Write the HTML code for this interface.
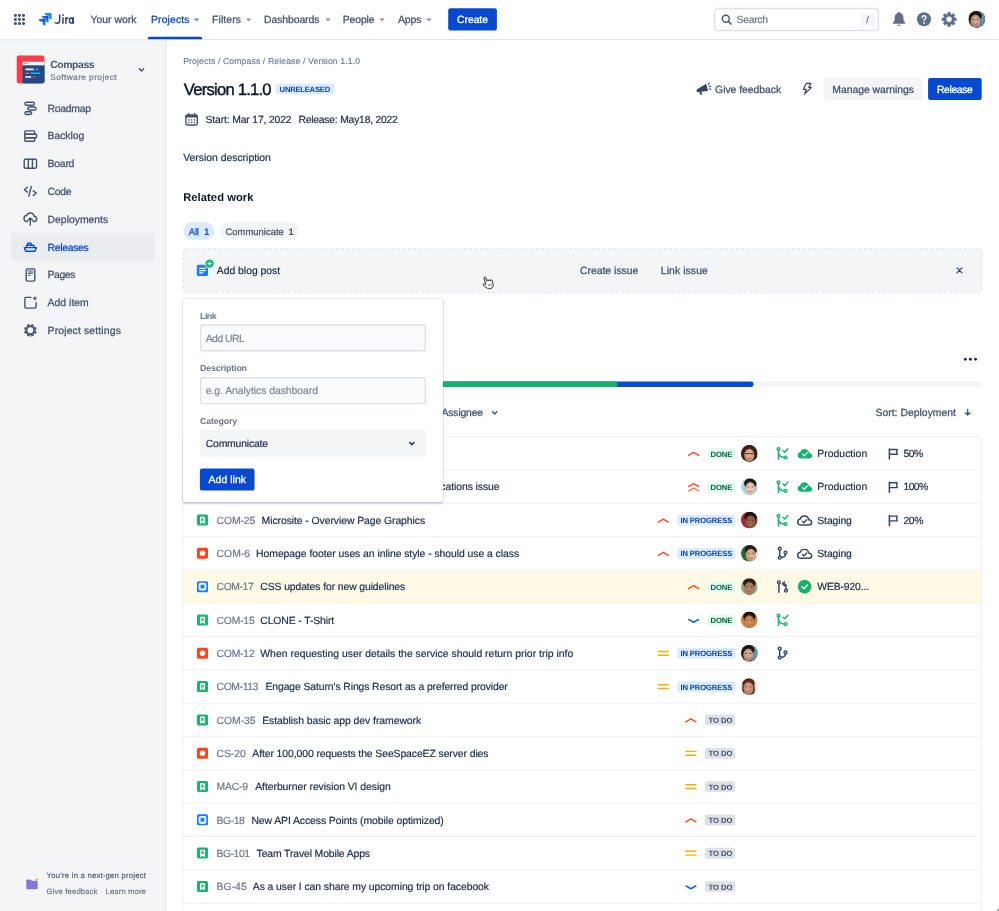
<!DOCTYPE html>
<html lang="en"><head><meta charset="utf-8"><title>Version 1.1.0 - Compass - Jira</title>
<style>
html,body{margin:0;padding:0;background:#fff;}
body{width:999px;height:911px;overflow:hidden;font-family:"Liberation Sans", sans-serif;}
#app{position:relative;width:999px;height:911px;overflow:hidden;background:#fff;font-family:"Liberation Sans", sans-serif;will-change:transform;}
.t{position:absolute;white-space:pre;line-height:1;font-family:"Liberation Sans", sans-serif;text-rendering:geometricPrecision;}
.a{position:absolute;}
svg{position:absolute;overflow:visible;}
</style></head>
<body>
<div id="app">
<div class="a" style="left:0.00px;top:0.00px;width:999.00px;height:39.00px;background:#fff;"></div>
<div class="a" style="left:0;top:38.900px;width:999px;height:1px;background:#E3E5EA;"></div>
<div class="a" style="left:0.00px;top:39.40px;width:165.20px;height:871.60px;background:#F4F5F7;"></div>
<div class="a" style="left:165px;top:39.400px;width:1.800px;height:871.6px;background:linear-gradient(to right,#F0F1F4,#ECEDF1);"></div>
<div class="a" style="left:0;top:39.400px;width:166.800px;height:2px;background:linear-gradient(to bottom,rgba(9,30,66,0.05),rgba(9,30,66,0));"></div>
<div class="a" style="left:11.20px;top:233.20px;width:144.10px;height:27.60px;background:#EBECF0;border-radius:3px;"></div>
<svg style="left:0;top:0;" width="999" height="911" viewBox="0 0 999 911"><rect x="13.90" y="13.95" width="3" height="3" rx="1.4" fill="#42526E"/><rect x="13.90" y="18.00" width="3" height="3" rx="1.4" fill="#42526E"/><rect x="13.90" y="22.05" width="3" height="3" rx="1.4" fill="#42526E"/><rect x="17.95" y="13.95" width="3" height="3" rx="1.4" fill="#42526E"/><rect x="17.95" y="18.00" width="3" height="3" rx="1.4" fill="#42526E"/><rect x="17.95" y="22.05" width="3" height="3" rx="1.4" fill="#42526E"/><rect x="22.00" y="13.95" width="3" height="3" rx="1.4" fill="#42526E"/><rect x="22.00" y="18.00" width="3" height="3" rx="1.4" fill="#42526E"/><rect x="22.00" y="22.05" width="3" height="3" rx="1.4" fill="#42526E"/><defs><linearGradient id="jg1" x1="0.95" y1="0.05" x2="0.45" y2="0.6"><stop offset="0.15" stop-color="#0052CC"/><stop offset="1" stop-color="#2684FF"/></linearGradient></defs><g transform="translate(38.7 13.0) scale(0.536 0.527)"><path d="M23.013 0H11.455a5.215 5.215 0 0 0 5.215 5.215h2.129v2.057A5.215 5.215 0 0 0 24 12.483V1.005A1.001 1.001 0 0 0 23.013 0z" fill="#2684FF"/><path d="M17.294 5.757H5.736a5.215 5.215 0 0 0 5.215 5.214h2.129v2.058a5.218 5.218 0 0 0 5.215 5.214V6.758a1.001 1.001 0 0 0-1.001-1.001z" fill="url(#jg1)"/><path d="M11.571 11.513H0a5.218 5.218 0 0 0 5.232 5.215h2.13v2.057A5.215 5.215 0 0 0 12.575 24V12.518a1.005 1.005 0 0 0-1.005-1.005z" fill="url(#jg1)"/></g><g fill="none" stroke="#253858" stroke-width="1.4" stroke-linecap="butt"><path d="M59.7 14.5V20.5C59.7 22.3 58.6 23.2 57.1 23.2C56.100 23.200 55.300 23 54.600 22.500"/><path d="M63 17.300V23.800"/><path d="M65.900 17.300V23.800M65.900 20.300C65.900 18.700 66.800 17.900 68.300 18"/><path d="M73.200 17.300V23.800"/><ellipse cx="71.300" cy="20.600" rx="1.900" ry="2.550"/></g><circle cx="63" cy="15.100" r="0.950" fill="#253858"/><path d="M194.30 18.70h4.4l-2.2 2.5z" fill="#4A86E8" stroke="#4A86E8" stroke-width="0.4" stroke-linejoin="round"/><path d="M246.40 18.70h4.4l-2.2 2.5z" fill="#8792A8" stroke="#8792A8" stroke-width="0.4" stroke-linejoin="round"/><path d="M325.80 18.70h4.4l-2.2 2.5z" fill="#8792A8" stroke="#8792A8" stroke-width="0.4" stroke-linejoin="round"/><path d="M379.80 18.70h4.4l-2.2 2.5z" fill="#8792A8" stroke="#8792A8" stroke-width="0.4" stroke-linejoin="round"/><path d="M426.80 18.70h4.4l-2.2 2.5z" fill="#8792A8" stroke="#8792A8" stroke-width="0.4" stroke-linejoin="round"/><path d="M148 39.150v-1.250a1.100 1.100 0 0 1 1.100-1.100h51.800a1.100 1.100 0 0 1 1.100 1.100v1.250z" fill="#0749D1"/><rect x="448.2" y="8.3" width="48.7" height="22.2" rx="2.2" fill="#0749D1"/><rect x="714.500" y="8.500" width="163.900" height="22" rx="3.600" fill="#fff" stroke="#DFE1E6" stroke-width="1.400"/><circle cx="725.800" cy="18.800" r="3.500" fill="none" stroke="#42526E" stroke-width="1.400"/><path d="M728.400 21.400l2.600 2.600" stroke="#42526E" stroke-width="1.500" stroke-linecap="round"/><rect x="861" y="13.1" width="13.5" height="12.6" rx="2" fill="#F4F5F7"/><path d="M899.05 12.1c.55 0 1 .4 1 .95c2.1.5 3.4 2.200 3.400 4.500v2.600l1.700 2.500c.3.450 0 1.050-.550 1.050h-11.100c-.550 0-.850-.600-.550-1.050l1.700-2.500v-2.600c0-2.300 1.300-4 3.400-4.500c0-.550.450-.950 1-.950z" fill="#5F6E89"/><path d="M897.500 24.800h3.100a1.550 1.350 0 0 1 -3.100 0z" fill="#5F6E89"/><circle cx="924" cy="19.3" r="7.05" fill="#5F6E89"/><path d="M922.100 17.700c0-1.100.850-1.950 1.950-1.950s1.950.750 1.950 1.800c0 1.400-1.950 1.500-1.950 3.100" fill="none" stroke="#fff" stroke-width="1.300" stroke-linecap="round"/><circle cx="924.05" cy="22.900" r=".85" fill="#fff"/><path d="M950.33 26.50L947.87 26.50L947.53 24.41L946.63 24.04L944.91 25.27L943.18 23.54L944.41 21.82L944.04 20.92L941.95 20.58L941.95 18.12L944.04 17.78L944.41 16.88L943.18 15.16L944.91 13.43L946.63 14.66L947.53 14.29L947.87 12.20L950.33 12.20L950.67 14.29L951.57 14.66L953.29 13.43L955.02 15.16L953.79 16.88L954.16 17.78L956.25 18.12L956.25 20.58L954.16 20.92L953.79 21.82L955.02 23.54L953.29 25.27L951.57 24.04L950.67 24.41Z M952.10 19.35a3.0 3.0 0 1 0 -6.0 0a3.0 3.0 0 1 0 6.0 0z" fill="#5F6E89" fill-rule="evenodd" stroke="#5F6E89" stroke-width="0.5" stroke-linejoin="round"/><clipPath id="avu"><circle cx="976.80" cy="19.30" r="8.40"/></clipPath><radialGradient id="avug" cx="0.5" cy="0.45" r="0.6"><stop offset="0.45" stop-color="#D3A188"/><stop offset="1" stop-color="#D3A188" stop-opacity="0.6"/></radialGradient><g clip-path="url(#avu)"><rect x="968.40" y="10.90" width="16.80" height="16.80" fill="#1B1717"/><rect x="977.64" y="10.90" width="8.40" height="16.80" fill="#5E93A6"/><ellipse cx="975.54" cy="31.48" rx="7.98" ry="4.20" fill="#1B1717"/><ellipse cx="975.54" cy="15.94" rx="6.22" ry="5.04" fill="#16120F"/><ellipse cx="975.54" cy="20.98" rx="5.38" ry="6.72" fill="#16120F" opacity="0.3"/><ellipse cx="975.54" cy="21.15" rx="5.12" ry="6.55" fill="url(#avug)"/><rect x="972.52" y="19.05" width="1.85" height="0.92" fill="#2A1A14" opacity="0.6"/><rect x="976.72" y="19.05" width="1.85" height="0.92" fill="#2A1A14" opacity="0.6"/><path d="M973.44 23.67Q975.54 25.35 977.64 23.67" fill="#fff" fill-opacity="0.55" stroke="#7A2E2A" stroke-width="0.67" opacity="0.75"/></g><clipPath id="pav"><rect x="16.5" y="55.3" width="28.1" height="28.1" rx="2.6"/></clipPath><g clip-path="url(#pav)"><rect x="16.5" y="55.3" width="28.1" height="28.1" fill="#FF3B47"/><rect x="22.6" y="61.7" width="23" height="23" rx="1" fill="#1F4A87"/><rect x="22.6" y="61.7" width="23" height="3.6" fill="#F4F5F7"/><rect x="24.2" y="62.9" width="1.3" height="1.2" fill="#FF5630"/><rect x="26" y="62.900" width="1.3" height="1.2" fill="#FFC400"/><rect x="27.800" y="62.900" width="1.3" height="1.2" fill="#57D9A3"/><rect x="25.3" y="68.6" width="8.6" height="1.6" rx=".5" fill="#fff"/><rect x="35.500" y="68.600" width="2.6" height="1.6" rx=".5" fill="#4C9AFF"/><rect x="25.3" y="72.4" width="4" height="1.6" rx=".5" fill="#FF5630"/><rect x="30.600" y="72.400" width="9.6" height="1.6" rx=".5" fill="#00C7E6"/><rect x="25.3" y="76.2" width="6" height="1.6" rx=".5" fill="#fff"/><rect x="33" y="76.200" width="2.400" height="1.6" rx=".5" fill="#FF5630"/></g><path d="M139.35 68.80L141.50 71.00L143.65 68.80" fill="none" stroke="#42526E" stroke-width="1.4" stroke-linecap="round" stroke-linejoin="round"/><g fill="none" stroke="#42526E" stroke-width="1.4" stroke-linecap="round" stroke-linejoin="round"><rect x="24.9" y="102.2" width="9.4" height="3.1" rx="1.55"/><rect x="27.8" y="106.95" width="8.2" height="3.1" rx="1.55"/><rect x="24.9" y="111.700" width="6.8" height="2.8" rx="1.4"/></g><g fill="none" stroke="#42526E" stroke-width="1.4" stroke-linecap="round" stroke-linejoin="round"><rect x="24.700" y="130.900" width="10" height="3.300" rx="1"/><rect x="24.700" y="134.200" width="12" height="3.600" rx="1"/><rect x="24.700" y="137.800" width="10" height="3.400" rx="1"/></g><g fill="none" stroke="#42526E" stroke-width="1.4" stroke-linecap="round" stroke-linejoin="round"><rect x="24.2" y="159.2" width="12.3" height="9" rx="1.1"/><path d="M28.300 159.200v9M32.400 159.200v9"/></g><g fill="none" stroke="#42526E" stroke-width="1.4" stroke-linecap="round" stroke-linejoin="round"><path d="M27.400 187.300L24.400 189.700L27.400 192.100M33.200 190.700L36.200 193.100L33.200 195.500M31.300 186.500L28.800 196.400"/></g><g fill="none" stroke="#42526E" stroke-width="1.4" stroke-linecap="round" stroke-linejoin="round"><path d="M27.400 221.500C25.400 221.500 24 220.200 24 218.400C24 216.800 25.200 215.500 26.800 215.300C27.300 213.900 28.700 213 30.300 213C32.300 213 33.900 214.400 34.200 216.300C35.600 216.400 36.600 217.500 36.600 218.900C36.600 220.300 35.500 221.500 34 221.500H33.200"/><path d="M30.300 225.300V218.300M28 220.300L30.300 218L32.600 220.300"/></g><g fill="none" stroke="#0749D1" stroke-width="1.4" stroke-linecap="round" stroke-linejoin="round"><path d="M24.200 247.600H36.500L35 251.200H25.700Z"/><path d="M26.600 247.600V245.300H33.600L34.400 247.600M27.700 245.300V243.100H31V245.300"/></g><g fill="none" stroke="#42526E" stroke-width="1.4" stroke-linecap="round" stroke-linejoin="round"><rect x="26.200" y="268.900" width="8.600" height="12.200" rx="1.100"/><path d="M28.300 271h4.400M28.300 273.100h4.400M28.300 275.200h2" stroke-width="1.100"/></g><g fill="none" stroke="#42526E" stroke-width="1.4" stroke-linecap="round" stroke-linejoin="round"><path d="M30.800 297.400H26a1.100 1.100 0 0 0 -1.100 1.100V307a1.100 1.100 0 0 0 1.100 1.100H35a1.100 1.100 0 0 0 1.100 -1.100V302.700"/></g><path d="M34.900 295.700l.75 1.850l1.850.75l-1.850.75l-.75 1.850l-.75-1.850l-1.850-.75l1.850-.75z" fill="#42526E"/><circle cx="30.35" cy="330.35" r="3.900" fill="none" stroke="#42526E" stroke-width="1.800"/><path d="M34.51 332.07L36.12 332.74" stroke="#42526E" stroke-width="2.800" stroke-linecap="butt"/><path d="M32.07 334.51L32.74 336.12" stroke="#42526E" stroke-width="2.800" stroke-linecap="butt"/><path d="M28.63 334.51L27.96 336.12" stroke="#42526E" stroke-width="2.800" stroke-linecap="butt"/><path d="M26.19 332.07L24.58 332.74" stroke="#42526E" stroke-width="2.800" stroke-linecap="butt"/><path d="M26.19 328.63L24.58 327.96" stroke="#42526E" stroke-width="2.800" stroke-linecap="butt"/><path d="M28.63 326.19L27.96 324.58" stroke="#42526E" stroke-width="2.800" stroke-linecap="butt"/><path d="M32.07 326.19L32.74 324.58" stroke="#42526E" stroke-width="2.800" stroke-linecap="butt"/><path d="M34.51 328.63L36.12 327.96" stroke="#42526E" stroke-width="2.800" stroke-linecap="butt"/><path d="M26.300 880.300a.800 .800 0 0 1 .800 -.800h3.400l1.200 1.200h5.200a.800 .800 0 0 1 .800 .800v6.900a.800 .800 0 0 1 -.800 .800h-9.800a.800 .800 0 0 1 -.800 -.800z" fill="#8777D9"/><path d="M37 877.600l.6 1.500l1.500.6l-1.500.6l-.6 1.500l-.6-1.500l-1.500-.6l1.500-.6z" fill="#FFAB00"/><rect x="276" y="83.400" width="58" height="11.200" rx="2" fill="#DEEBFF"/><rect x="185.900" y="115.200" width="11.400" height="9.800" rx="1.400" fill="none" stroke="#42526E" stroke-width="1.400"/><path d="M185.200 117.600V116.600A2.100 2.100 0 0 1 187.300 114.500H195.900A2.100 2.100 0 0 1 198 116.600V117.600Z" fill="#42526E"/><path d="M188.600 113.700v1.600M194.600 113.700v1.600" stroke="#42526E" stroke-width="1.600" stroke-linecap="round"/><rect x="188.10" y="119.20" width="1.400" height="1.400" fill="#42526E"/><rect x="188.10" y="121.80" width="1.400" height="1.400" fill="#42526E"/><rect x="190.90" y="119.20" width="1.400" height="1.400" fill="#42526E"/><rect x="190.90" y="121.80" width="1.400" height="1.400" fill="#42526E"/><rect x="193.70" y="119.20" width="1.400" height="1.400" fill="#42526E"/><rect x="193.70" y="121.80" width="1.400" height="1.400" fill="#42526E"/><path d="M697.500 88.900L705.500 84.200a.550 .550 0 0 1 .800 .350L707.900 90.300a.550 .550 0 0 1 -.600 .700L699 92.100a1.650 1.650 0 0 1 -1.500 -3.200z" fill="#344563"/><path d="M699.300 91.800l1 2.700a.600 .600 0 0 0 .800 .350l.700-.300a.600 .600 0 0 0 .300-.800l-.800-2.100z" fill="#344563"/><path d="M708.300 84.500l1-1.400M709.100 86.700l1.700-.600M709.400 88.800l1.500.500" stroke="#344563" stroke-width="1.100" stroke-linecap="round"/><path d="M806.200 83.400h4.700l-2.200 3.900h2.700l-6.800 6.900l1.700-4.900h-2.900z" fill="none" stroke="#344563" stroke-width="1.150" stroke-linejoin="round"/><rect x="823.400" y="77.900" width="99.300" height="22" rx="2.200" fill="#F4F5F7"/><rect x="928.100" y="77.900" width="53.600" height="22" rx="2.200" fill="#0749D1"/><rect x="183.200" y="222" width="31.100" height="18" rx="9" fill="#DEEBFF"/><rect x="219.900" y="222" width="79" height="18" rx="9" fill="#F4F5F7"/><rect x="183.100" y="248.600" width="798.600" height="44.200" rx="2.500" fill="#F4F5F7" stroke="#DFE1E6" stroke-width="1" stroke-dasharray="2.780 2.780"/><rect x="196.800" y="264.700" width="11.200" height="11.300" rx="1.600" fill="#1A7DFF"/><path d="M199.200 268.300h6.600M199.200 270.550h6.600M199.200 272.800h4" stroke="#fff" stroke-width="1.150"/><circle cx="209.600" cy="263.600" r="4.900" fill="#F4F5F7"/><circle cx="209.600" cy="263.600" r="4.200" fill="#18B56F"/><path d="M207.600 263.600h4M209.600 261.600v4" stroke="#fff" stroke-width="1.050"/><path d="M957 267.900l5 5M962 267.900l-5 5" stroke="#2F3E5C" stroke-width="1.250" stroke-linecap="round"/><circle cx="965.3" cy="359.300" r="1.450" fill="#172B4D"/><circle cx="970.4" cy="359.300" r="1.450" fill="#172B4D"/><circle cx="975.5" cy="359.300" r="1.450" fill="#172B4D"/><rect x="183.200" y="381.500" width="798.500" height="5.500" rx="2.750" fill="#F4F5F7"/><rect x="183.200" y="381.500" width="570.300" height="5.500" rx="2.750" fill="#0749D1"/><path d="M185.950 381.500h431.300v5.500h-431.300a2.750 2.750 0 0 1 0 -5.500z" fill="#10B46C"/><path d="M492.55 411.80L494.70 414.00L496.85 411.80" fill="none" stroke="#42526E" stroke-width="1.4" stroke-linecap="round" stroke-linejoin="round"/><path d="M967.700 409.400v5.500M965.400 412.700l2.300 2.300l2.300-2.300" fill="none" stroke="#42526E" stroke-width="1.300" stroke-linecap="round" stroke-linejoin="round"/><rect x="182.8" y="436.75" width="798.9000000000001" height="484.25" rx="2.500" fill="#fff" stroke="#EEEFF2" stroke-width="1"/><path d="M182.8 470.06H981.7" stroke="#F2F3F5" stroke-width="1.200"/><path d="M182.8 503.37H981.7" stroke="#F2F3F5" stroke-width="1.200"/><path d="M182.8 536.68H981.7" stroke="#F2F3F5" stroke-width="1.200"/><path d="M182.8 569.99H981.7" stroke="#F2F3F5" stroke-width="1.200"/><path d="M182.8 603.30H981.7" stroke="#F2F3F5" stroke-width="1.200"/><path d="M182.8 636.61H981.7" stroke="#F2F3F5" stroke-width="1.200"/><path d="M182.8 669.92H981.7" stroke="#F2F3F5" stroke-width="1.200"/><path d="M182.8 703.23H981.7" stroke="#F2F3F5" stroke-width="1.200"/><path d="M182.8 736.54H981.7" stroke="#F2F3F5" stroke-width="1.200"/><path d="M182.8 769.85H981.7" stroke="#F2F3F5" stroke-width="1.200"/><path d="M182.8 803.16H981.7" stroke="#F2F3F5" stroke-width="1.200"/><path d="M182.8 836.47H981.7" stroke="#F2F3F5" stroke-width="1.200"/><path d="M182.8 869.78H981.7" stroke="#F2F3F5" stroke-width="1.200"/><path d="M182.8 903.09H981.7" stroke="#F2F3F5" stroke-width="1.200"/><rect x="183.3" y="569.99" width="797.9000000000001" height="33.86" fill="#FFFAE6"/><rect x="707.700" y="448.10" width="27.500" height="10.900" rx="2" fill="#E3FCEF"/><path d="M688.65 455.40L693.65 452.40L698.65 455.40" fill="none" stroke="#FF4B1F" stroke-width="1.5" stroke-linecap="round" stroke-linejoin="round"/><rect x="707.700" y="481.42" width="27.500" height="10.900" rx="2" fill="#E3FCEF"/><path d="M688.65 486.42L693.65 483.52L698.65 486.42" fill="none" stroke="#FF4B1F" stroke-width="1.4" stroke-linecap="round" stroke-linejoin="round"/><path d="M688.65 490.92L693.65 488.02L698.65 490.92" fill="none" stroke="#FF7452" stroke-width="1.4" stroke-linecap="round" stroke-linejoin="round"/><rect x="197.0" y="514.52" width="11.0" height="11.0" rx="1.5" fill="#18B56F"/><path d="M200.7 517.47h3.6v5.5l-1.8-1.5l-1.8 1.5z" fill="none" stroke="#fff" stroke-width="1.45" stroke-linejoin="round"/><rect x="677.200" y="514.73" width="58" height="10.900" rx="2" fill="#DEEBFF"/><path d="M658.30 522.02L663.30 519.02L668.30 522.02" fill="none" stroke="#FF4B1F" stroke-width="1.5" stroke-linecap="round" stroke-linejoin="round"/><rect x="197.0" y="547.84" width="11.0" height="11.0" rx="1.5" fill="#FF4218"/><circle cx="202.5" cy="553.34" r="2.75" fill="#fff"/><rect x="677.200" y="548.04" width="58" height="10.900" rx="2" fill="#DEEBFF"/><path d="M658.30 555.34L663.30 552.34L668.30 555.34" fill="none" stroke="#FF4B1F" stroke-width="1.5" stroke-linecap="round" stroke-linejoin="round"/><rect x="197.0" y="581.14" width="11.0" height="11.0" rx="1.5" fill="#127FFF"/><rect x="199.6" y="583.74" width="5.8" height="5.8" rx="1" fill="none" stroke="#fff" stroke-width="1.9"/><rect x="707.700" y="581.35" width="27.500" height="10.900" rx="2" fill="#E3FCEF"/><path d="M688.65 588.64L693.65 585.64L698.65 588.64" fill="none" stroke="#FF4B1F" stroke-width="1.5" stroke-linecap="round" stroke-linejoin="round"/><rect x="197.0" y="614.45" width="11.0" height="11.0" rx="1.5" fill="#18B56F"/><path d="M200.7 617.4000000000001h3.6v5.5l-1.8-1.5l-1.8 1.5z" fill="none" stroke="#fff" stroke-width="1.45" stroke-linejoin="round"/><rect x="707.700" y="614.65" width="27.500" height="10.900" rx="2" fill="#E3FCEF"/><path d="M688.75 619.55L693.65 622.25L698.55 619.55" fill="none" stroke="#0C66FF" stroke-width="1.55" stroke-linecap="round" stroke-linejoin="round"/><rect x="197.0" y="647.76" width="11.0" height="11.0" rx="1.5" fill="#FF4218"/><circle cx="202.5" cy="653.26" r="2.75" fill="#fff"/><rect x="677.200" y="647.97" width="58" height="10.900" rx="2" fill="#DEEBFF"/><path d="M658.20 651.47h10.2M658.20 655.26h10.2" fill="none" stroke="#FFAB00" stroke-width="1.45" stroke-linecap="round"/><rect x="197.0" y="681.08" width="11.0" height="11.0" rx="1.5" fill="#18B56F"/><path d="M200.7 684.0300000000001h3.6v5.5l-1.8-1.5l-1.8 1.5z" fill="none" stroke="#fff" stroke-width="1.45" stroke-linejoin="round"/><rect x="677.200" y="681.28" width="58" height="10.900" rx="2" fill="#DEEBFF"/><path d="M658.20 684.78h10.2M658.20 688.58h10.2" fill="none" stroke="#FFAB00" stroke-width="1.45" stroke-linecap="round"/><rect x="197.0" y="714.38" width="11.0" height="11.0" rx="1.5" fill="#18B56F"/><path d="M200.7 717.33h3.6v5.5l-1.8-1.5l-1.8 1.5z" fill="none" stroke="#fff" stroke-width="1.45" stroke-linejoin="round"/><rect x="704.900" y="714.59" width="30.300" height="10.900" rx="2" fill="#DFE1E6"/><path d="M685.90 721.88L690.90 718.88L695.90 721.88" fill="none" stroke="#FF4B1F" stroke-width="1.5" stroke-linecap="round" stroke-linejoin="round"/><rect x="197.0" y="747.69" width="11.0" height="11.0" rx="1.5" fill="#FF4218"/><circle cx="202.5" cy="753.19" r="2.75" fill="#fff"/><rect x="704.900" y="747.89" width="30.300" height="10.900" rx="2" fill="#DFE1E6"/><path d="M685.80 751.39h10.2M685.80 755.19h10.2" fill="none" stroke="#FFAB00" stroke-width="1.45" stroke-linecap="round"/><rect x="197.0" y="781.0" width="11.0" height="11.0" rx="1.5" fill="#18B56F"/><path d="M200.7 783.95h3.6v5.5l-1.8-1.5l-1.8 1.5z" fill="none" stroke="#fff" stroke-width="1.45" stroke-linejoin="round"/><rect x="704.900" y="781.21" width="30.300" height="10.900" rx="2" fill="#DFE1E6"/><path d="M685.80 784.71h10.2M685.80 788.50h10.2" fill="none" stroke="#FFAB00" stroke-width="1.45" stroke-linecap="round"/><rect x="197.0" y="814.32" width="11.0" height="11.0" rx="1.5" fill="#127FFF"/><rect x="199.6" y="816.9200000000001" width="5.8" height="5.8" rx="1" fill="none" stroke="#fff" stroke-width="1.9"/><rect x="704.900" y="814.52" width="30.300" height="10.900" rx="2" fill="#DFE1E6"/><path d="M685.90 821.82L690.90 818.82L695.90 821.82" fill="none" stroke="#FF4B1F" stroke-width="1.5" stroke-linecap="round" stroke-linejoin="round"/><rect x="197.0" y="847.62" width="11.0" height="11.0" rx="1.5" fill="#18B56F"/><path d="M200.7 850.57h3.6v5.5l-1.8-1.5l-1.8 1.5z" fill="none" stroke="#fff" stroke-width="1.45" stroke-linejoin="round"/><rect x="704.900" y="847.83" width="30.300" height="10.900" rx="2" fill="#DFE1E6"/><path d="M685.80 851.33h10.2M685.80 855.12h10.2" fill="none" stroke="#FFAB00" stroke-width="1.45" stroke-linecap="round"/><rect x="197.0" y="880.93" width="11.0" height="11.0" rx="1.5" fill="#18B56F"/><path d="M200.7 883.88h3.6v5.5l-1.8-1.5l-1.8 1.5z" fill="none" stroke="#fff" stroke-width="1.45" stroke-linejoin="round"/><rect x="704.900" y="881.13" width="30.300" height="10.900" rx="2" fill="#DFE1E6"/><path d="M686.00 886.03L690.90 888.74L695.80 886.03" fill="none" stroke="#0C66FF" stroke-width="1.55" stroke-linecap="round" stroke-linejoin="round"/><clipPath id="av0"><circle cx="749.30" cy="453.40" r="8.35"/></clipPath><radialGradient id="av0g" cx="0.5" cy="0.45" r="0.6"><stop offset="0.45" stop-color="#DCA98E"/><stop offset="1" stop-color="#DCA98E" stop-opacity="0.6"/></radialGradient><g clip-path="url(#av0)"><rect x="740.95" y="445.05" width="16.70" height="16.70" fill="#3E241B"/><ellipse cx="749.30" cy="455.91" rx="7.93" ry="10.86" fill="#3A2018"/><ellipse cx="749.30" cy="465.51" rx="7.93" ry="4.17" fill="#3A2018"/><ellipse cx="749.30" cy="450.06" rx="6.18" ry="5.01" fill="#3A2018"/><ellipse cx="749.30" cy="455.07" rx="5.34" ry="6.68" fill="#3A2018" opacity="0.3"/><ellipse cx="749.30" cy="455.24" rx="5.09" ry="6.51" fill="url(#av0g)"/><path d="M744.96 453.57h8.68" stroke="#2A1A14" stroke-width="1.17" opacity="0.55"/><rect x="746.29" y="453.15" width="1.84" height="0.92" fill="#2A1A14" opacity="0.6"/><rect x="750.47" y="453.15" width="1.84" height="0.92" fill="#2A1A14" opacity="0.6"/><path d="M747.21 457.75Q749.30 459.42 751.39 457.75" fill="#fff" fill-opacity="0.55" stroke="#7A2E2A" stroke-width="0.67" opacity="0.75"/></g><clipPath id="av1"><circle cx="749.30" cy="486.72" r="8.35"/></clipPath><radialGradient id="av1g" cx="0.5" cy="0.45" r="0.6"><stop offset="0.45" stop-color="#EEC6B2"/><stop offset="1" stop-color="#EEC6B2" stop-opacity="0.6"/></radialGradient><g clip-path="url(#av1)"><rect x="740.95" y="478.37" width="16.70" height="16.70" fill="#A9D3EA"/><ellipse cx="750.30" cy="498.82" rx="7.93" ry="4.17" fill="#7FB2D4"/><ellipse cx="750.30" cy="483.38" rx="6.18" ry="5.01" fill="#1E191B"/><ellipse cx="750.30" cy="488.39" rx="5.34" ry="6.68" fill="#1E191B" opacity="0.3"/><ellipse cx="750.30" cy="488.55" rx="5.09" ry="6.51" fill="url(#av1g)"/><rect x="747.30" y="486.46" width="1.84" height="0.92" fill="#2A1A14" opacity="0.6"/><rect x="751.47" y="486.46" width="1.84" height="0.92" fill="#2A1A14" opacity="0.6"/><path d="M748.21 491.06Q750.30 492.73 752.39 491.06" fill="#fff" fill-opacity="0.55" stroke="#7A2E2A" stroke-width="0.67" opacity="0.75"/></g><clipPath id="av2"><circle cx="749.30" cy="520.02" r="8.35"/></clipPath><radialGradient id="av2g" cx="0.5" cy="0.45" r="0.6"><stop offset="0.45" stop-color="#96623F"/><stop offset="1" stop-color="#96623F" stop-opacity="0.6"/></radialGradient><g clip-path="url(#av2)"><rect x="740.95" y="511.67" width="16.70" height="16.70" fill="#A3283A"/><ellipse cx="750.55" cy="532.13" rx="7.93" ry="4.17" fill="#7A2A30"/><ellipse cx="750.55" cy="516.68" rx="6.18" ry="5.01" fill="#1B1412"/><ellipse cx="750.55" cy="521.69" rx="5.34" ry="6.68" fill="#1B1412" opacity="0.3"/><ellipse cx="750.55" cy="521.86" rx="5.09" ry="6.51" fill="url(#av2g)"/><rect x="747.55" y="519.77" width="1.84" height="0.92" fill="#2A1A14" opacity="0.6"/><rect x="751.72" y="519.77" width="1.84" height="0.92" fill="#2A1A14" opacity="0.6"/><path d="M748.47 524.37Q750.55 526.04 752.64 524.37" fill="#fff" fill-opacity="0.55" stroke="#7A2E2A" stroke-width="0.67" opacity="0.75"/></g><clipPath id="av3"><circle cx="749.30" cy="553.34" r="8.35"/></clipPath><radialGradient id="av3g" cx="0.5" cy="0.45" r="0.6"><stop offset="0.45" stop-color="#DDAB8D"/><stop offset="1" stop-color="#DDAB8D" stop-opacity="0.6"/></radialGradient><g clip-path="url(#av3)"><rect x="740.95" y="544.99" width="16.70" height="16.70" fill="#1F6B3C"/><rect x="751.80" y="544.99" width="8.35" height="16.70" fill="#E9ECEA"/><ellipse cx="750.80" cy="565.44" rx="7.93" ry="4.17" fill="#F1F1F1"/><ellipse cx="750.80" cy="550.00" rx="6.18" ry="5.01" fill="#2A1C14"/><ellipse cx="750.80" cy="555.00" rx="5.34" ry="6.68" fill="#2A1C14" opacity="0.3"/><ellipse cx="750.80" cy="555.17" rx="5.09" ry="6.51" fill="url(#av3g)"/><rect x="747.80" y="553.08" width="1.84" height="0.92" fill="#2A1A14" opacity="0.6"/><rect x="751.97" y="553.08" width="1.84" height="0.92" fill="#2A1A14" opacity="0.6"/><path d="M748.72 557.68Q750.80 559.35 752.89 557.68" fill="#fff" fill-opacity="0.55" stroke="#7A2E2A" stroke-width="0.67" opacity="0.75"/></g><clipPath id="av4"><circle cx="749.30" cy="586.64" r="8.35"/></clipPath><radialGradient id="av4g" cx="0.5" cy="0.45" r="0.6"><stop offset="0.45" stop-color="#B47F5E"/><stop offset="1" stop-color="#B47F5E" stop-opacity="0.6"/></radialGradient><g clip-path="url(#av4)"><rect x="740.95" y="578.29" width="16.70" height="16.70" fill="#8EA57C"/><ellipse cx="749.30" cy="598.75" rx="7.93" ry="4.17" fill="#6E7F66"/><ellipse cx="749.30" cy="583.30" rx="6.18" ry="5.01" fill="#2A1D17"/><ellipse cx="749.30" cy="588.31" rx="5.34" ry="6.68" fill="#2A1D17" opacity="0.3"/><ellipse cx="749.30" cy="588.48" rx="5.09" ry="6.51" fill="url(#av4g)"/><rect x="746.29" y="586.39" width="1.84" height="0.92" fill="#2A1A14" opacity="0.6"/><rect x="750.47" y="586.39" width="1.84" height="0.92" fill="#2A1A14" opacity="0.6"/><path d="M747.21 590.99Q749.30 592.66 751.39 590.99" fill="#fff" fill-opacity="0.55" stroke="#7A2E2A" stroke-width="0.67" opacity="0.75"/></g><clipPath id="av5"><circle cx="749.30" cy="619.95" r="8.35"/></clipPath><radialGradient id="av5g" cx="0.5" cy="0.45" r="0.6"><stop offset="0.45" stop-color="#C98C5A"/><stop offset="1" stop-color="#C98C5A" stop-opacity="0.6"/></radialGradient><g clip-path="url(#av5)"><rect x="740.95" y="611.60" width="16.70" height="16.70" fill="#D8832E"/><ellipse cx="749.30" cy="632.06" rx="7.93" ry="4.17" fill="#B85A24"/><ellipse cx="749.30" cy="616.61" rx="6.18" ry="5.01" fill="#1E1410"/><ellipse cx="749.30" cy="621.62" rx="5.34" ry="6.68" fill="#1E1410" opacity="0.3"/><ellipse cx="749.30" cy="621.79" rx="5.09" ry="6.51" fill="url(#av5g)"/><rect x="746.29" y="619.70" width="1.84" height="0.92" fill="#2A1A14" opacity="0.6"/><rect x="750.47" y="619.70" width="1.84" height="0.92" fill="#2A1A14" opacity="0.6"/><path d="M747.21 624.30Q749.30 625.97 751.39 624.30" fill="#fff" fill-opacity="0.55" stroke="#7A2E2A" stroke-width="0.67" opacity="0.75"/></g><clipPath id="av6"><circle cx="749.30" cy="653.26" r="8.35"/></clipPath><radialGradient id="av6g" cx="0.5" cy="0.45" r="0.6"><stop offset="0.45" stop-color="#D0A690"/><stop offset="1" stop-color="#D0A690" stop-opacity="0.6"/></radialGradient><g clip-path="url(#av6)"><rect x="740.95" y="644.91" width="16.70" height="16.70" fill="#1D1A1C"/><rect x="751.80" y="644.91" width="8.35" height="16.70" fill="#6495AE"/><ellipse cx="748.30" cy="665.37" rx="7.93" ry="4.17" fill="#221C1C"/><ellipse cx="748.30" cy="649.92" rx="6.18" ry="5.01" fill="#181416"/><ellipse cx="748.30" cy="654.93" rx="5.34" ry="6.68" fill="#181416" opacity="0.3"/><ellipse cx="748.30" cy="655.10" rx="5.09" ry="6.51" fill="url(#av6g)"/><rect x="745.29" y="653.01" width="1.84" height="0.92" fill="#2A1A14" opacity="0.6"/><rect x="749.47" y="653.01" width="1.84" height="0.92" fill="#2A1A14" opacity="0.6"/><path d="M746.21 657.61Q748.30 659.28 750.39 657.61" fill="#fff" fill-opacity="0.55" stroke="#7A2E2A" stroke-width="0.67" opacity="0.75"/></g><clipPath id="av7"><circle cx="749.30" cy="686.58" r="8.35"/></clipPath><radialGradient id="av7g" cx="0.5" cy="0.45" r="0.6"><stop offset="0.45" stop-color="#D29A80"/><stop offset="1" stop-color="#D29A80" stop-opacity="0.6"/></radialGradient><g clip-path="url(#av7)"><rect x="740.95" y="678.23" width="16.70" height="16.70" fill="#E6E2DE"/><ellipse cx="748.46" cy="689.08" rx="6.35" ry="10.86" fill="#5A261B"/><ellipse cx="748.46" cy="698.68" rx="7.93" ry="4.17" fill="#D8D0C8"/><ellipse cx="748.46" cy="683.24" rx="6.18" ry="5.01" fill="#5A261B"/><ellipse cx="748.46" cy="688.25" rx="5.34" ry="6.68" fill="#5A261B" opacity="0.3"/><ellipse cx="748.46" cy="688.41" rx="5.09" ry="6.51" fill="url(#av7g)"/><rect x="745.46" y="686.32" width="1.84" height="0.92" fill="#2A1A14" opacity="0.6"/><rect x="749.63" y="686.32" width="1.84" height="0.92" fill="#2A1A14" opacity="0.6"/><path d="M746.38 690.92Q748.46 692.59 750.55 690.92" fill="#fff" fill-opacity="0.55" stroke="#7A2E2A" stroke-width="0.67" opacity="0.75"/></g><circle cx="778.50" cy="449.11" r="1.4" fill="none" stroke="#14B46D" stroke-width="1.4"/><circle cx="785.60" cy="457.50" r="1.4" fill="none" stroke="#14B46D" stroke-width="1.4"/><path d="M778.50 450.61V459.31" fill="none" stroke="#14B46D" stroke-width="1.5" stroke-linecap="round"/><path d="M778.50 453.20C779.00 456.61 781.60 457.31 784.10 457.50" fill="none" stroke="#14B46D" stroke-width="1.5" stroke-linecap="round"/><path d="M783.10 450.70l1.6 1.6l3.2-3.5" fill="none" stroke="#14B46D" stroke-width="1.45" stroke-linecap="round" stroke-linejoin="round"/><circle cx="778.50" cy="482.42" r="1.4" fill="none" stroke="#14B46D" stroke-width="1.4"/><circle cx="785.60" cy="490.82" r="1.4" fill="none" stroke="#14B46D" stroke-width="1.4"/><path d="M778.50 483.92V492.62" fill="none" stroke="#14B46D" stroke-width="1.5" stroke-linecap="round"/><path d="M778.50 486.52C779.00 489.92 781.60 490.62 784.10 490.82" fill="none" stroke="#14B46D" stroke-width="1.5" stroke-linecap="round"/><path d="M783.10 484.02l1.6 1.6l3.2-3.5" fill="none" stroke="#14B46D" stroke-width="1.45" stroke-linecap="round" stroke-linejoin="round"/><circle cx="778.50" cy="515.73" r="1.4" fill="none" stroke="#14B46D" stroke-width="1.4"/><circle cx="785.60" cy="524.12" r="1.4" fill="none" stroke="#14B46D" stroke-width="1.4"/><path d="M778.50 517.23V525.92" fill="none" stroke="#14B46D" stroke-width="1.5" stroke-linecap="round"/><path d="M778.50 519.83C779.00 523.23 781.60 523.92 784.10 524.12" fill="none" stroke="#14B46D" stroke-width="1.5" stroke-linecap="round"/><path d="M783.10 517.33l1.6 1.6l3.2-3.5" fill="none" stroke="#14B46D" stroke-width="1.45" stroke-linecap="round" stroke-linejoin="round"/><circle cx="779.70" cy="548.63" r="1.45" fill="none" stroke="#344563" stroke-width="1.4"/><circle cx="779.70" cy="557.63" r="1.45" fill="none" stroke="#344563" stroke-width="1.4"/><circle cx="785.50" cy="552.54" r="1.45" fill="none" stroke="#344563" stroke-width="1.4"/><path d="M779.70 550.13V556.13" fill="none" stroke="#344563" stroke-width="1.5"/><path d="M785.50 554.04C785.40 556.54 782.90 557.34 781.20 557.54" fill="none" stroke="#344563" stroke-width="1.5"/><circle cx="778.90" cy="582.35" r="1.45" fill="none" stroke="#344563" stroke-width="1.4"/><path d="M778.90 583.85V592.25" fill="none" stroke="#344563" stroke-width="1.5" stroke-linecap="round"/><circle cx="786.00" cy="590.54" r="1.45" fill="none" stroke="#344563" stroke-width="1.4"/><path d="M786.00 589.04V586.25C786.00 584.44 785.10 583.75 783.30 583.75" fill="none" stroke="#344563" stroke-width="1.5"/><path d="M784.50 581.75l-2.0 2.0l2.0 2.0" fill="none" stroke="#344563" stroke-width="1.4" stroke-linecap="round" stroke-linejoin="round"/><circle cx="778.50" cy="615.65" r="1.4" fill="none" stroke="#14B46D" stroke-width="1.4"/><circle cx="785.60" cy="624.05" r="1.4" fill="none" stroke="#14B46D" stroke-width="1.4"/><path d="M778.50 617.15V625.85" fill="none" stroke="#14B46D" stroke-width="1.5" stroke-linecap="round"/><path d="M778.50 619.75C779.00 623.15 781.60 623.85 784.10 624.05" fill="none" stroke="#14B46D" stroke-width="1.5" stroke-linecap="round"/><path d="M783.10 617.25l1.6 1.6l3.2-3.5" fill="none" stroke="#14B46D" stroke-width="1.45" stroke-linecap="round" stroke-linejoin="round"/><circle cx="779.70" cy="648.56" r="1.45" fill="none" stroke="#344563" stroke-width="1.4"/><circle cx="779.70" cy="657.56" r="1.45" fill="none" stroke="#344563" stroke-width="1.4"/><circle cx="785.50" cy="652.47" r="1.45" fill="none" stroke="#344563" stroke-width="1.4"/><path d="M779.70 650.06V656.06" fill="none" stroke="#344563" stroke-width="1.5"/><path d="M785.50 653.97C785.40 656.47 782.90 657.26 781.20 657.47" fill="none" stroke="#344563" stroke-width="1.5"/><path d="M801.25 458.40C799.06 458.40 797.60 457.00 797.60 455.21C797.60 453.61 798.70 452.39 800.25 452.11C800.79 450.23 802.53 449.00 804.53 449.00C806.91 449.00 808.82 450.70 809.19 452.95C810.92 453.05 812.20 454.27 812.20 455.77C812.20 457.28 810.92 458.40 809.28 458.40Z" fill="#14B46D"/><path d="M802.60 454.31l1.6 1.6l3.1-3.3" fill="none" stroke="#fff" stroke-width="1.3" stroke-linecap="round" stroke-linejoin="round"/><path d="M801.25 491.72C799.06 491.72 797.60 490.31 797.60 488.52C797.60 486.92 798.70 485.70 800.25 485.42C800.79 483.54 802.53 482.32 804.53 482.32C806.91 482.32 808.82 484.01 809.19 486.26C810.92 486.36 812.20 487.58 812.20 489.08C812.20 490.59 810.92 491.72 809.28 491.72Z" fill="#14B46D"/><path d="M802.60 487.62l1.6 1.6l3.1-3.3" fill="none" stroke="#fff" stroke-width="1.3" stroke-linecap="round" stroke-linejoin="round"/><path d="M801.15 524.97C799.05 524.97 797.65 523.64 797.65 521.95C797.65 520.44 798.70 519.28 800.19 519.01C800.71 517.23 802.38 516.07 804.30 516.07C806.57 516.07 808.41 517.68 808.76 519.81C810.42 519.90 811.65 521.06 811.65 522.48C811.65 523.91 810.42 524.97 808.85 524.97Z" fill="none" stroke="#344563" stroke-width="1.45" stroke-linejoin="round"/><path d="M802.45 521.23l1.5 1.5l2.8-3.0" fill="none" stroke="#344563" stroke-width="1.35" stroke-linecap="round" stroke-linejoin="round"/><path d="M801.15 558.28C799.05 558.28 797.65 556.95 797.65 555.26C797.65 553.75 798.70 552.59 800.19 552.32C800.71 550.54 802.38 549.38 804.30 549.38C806.57 549.38 808.41 550.99 808.76 553.12C810.42 553.21 811.65 554.37 811.65 555.79C811.65 557.22 810.42 558.28 808.85 558.28Z" fill="none" stroke="#344563" stroke-width="1.45" stroke-linejoin="round"/><path d="M802.45 554.54l1.5 1.5l2.8-3.0" fill="none" stroke="#344563" stroke-width="1.35" stroke-linecap="round" stroke-linejoin="round"/><circle cx="804.60" cy="586.64" r="6.8" fill="#14B46D"/><path d="M802.00 586.85l1.9 1.9l3.5-3.8" fill="none" stroke="#fff" stroke-width="1.4" stroke-linecap="round" stroke-linejoin="round"/><path d="M889.40 448.90V459.00" fill="none" stroke="#344563" stroke-width="1.55" stroke-linecap="round"/><path d="M889.40 449.50h7.8l-.5 2.4l.5 2.4h-7.8" fill="none" stroke="#344563" stroke-width="1.4" stroke-linejoin="round"/><path d="M889.40 482.22V492.31" fill="none" stroke="#344563" stroke-width="1.55" stroke-linecap="round"/><path d="M889.40 482.81h7.8l-.5 2.4l.5 2.4h-7.8" fill="none" stroke="#344563" stroke-width="1.4" stroke-linejoin="round"/><path d="M889.40 515.52V525.62" fill="none" stroke="#344563" stroke-width="1.55" stroke-linecap="round"/><path d="M889.40 516.12h7.8l-.5 2.4l.5 2.4h-7.8" fill="none" stroke="#344563" stroke-width="1.4" stroke-linejoin="round"/><g transform="translate(487.700 282.700) rotate(-15) scale(0.900) translate(-6.600 -7)"><path d="M4 6.800V1.100a1 1 0 0 1 2 0V5a1 1 0 0 1 2 .300a1 1 0 0 1 2 .400a1 1 0 0 1 2 .600V10c0 2.400-1.400 4-3.600 4H7c-1.200 0-2-.600-2.800-1.700L1.300 8.600a1 1 0 0 1 1.500-1.300L4 8.400z" fill="#fff" stroke="#262626" stroke-width="1" stroke-linejoin="round"/><path d="M6.700 8.800v2.600M8.300 8.800v2.600M9.900 8.800v2.600" stroke="#777" stroke-width=".8"/></g></svg>
<span class="t" style="left:90.50px;top:16.00px;font-size:10.4px;color:#42526E;font-weight:400;letter-spacing:0.021px;-webkit-text-stroke:0.27px #42526E;">Your work</span>
<span class="t" style="left:151.00px;top:16.00px;font-size:10.4px;color:#0749D1;font-weight:400;letter-spacing:0.136px;-webkit-text-stroke:0.27px #0749D1;">Projects</span>
<span class="t" style="left:212.00px;top:16.00px;font-size:10.4px;color:#42526E;font-weight:400;letter-spacing:0.117px;-webkit-text-stroke:0.27px #42526E;">Filters</span>
<span class="t" style="left:264.00px;top:16.00px;font-size:10.4px;color:#42526E;font-weight:400;letter-spacing:-0.070px;-webkit-text-stroke:0.27px #42526E;">Dashboards</span>
<span class="t" style="left:342.80px;top:16.00px;font-size:10.4px;color:#42526E;font-weight:400;letter-spacing:-0.112px;-webkit-text-stroke:0.27px #42526E;">People</span>
<span class="t" style="left:398.00px;top:16.00px;font-size:10.4px;color:#42526E;font-weight:400;letter-spacing:-0.096px;-webkit-text-stroke:0.27px #42526E;">Apps</span>
<span class="t" style="left:457.00px;top:16.00px;font-size:10.4px;color:#fff;font-weight:400;letter-spacing:-0.037px;-webkit-text-stroke:0.3px #fff;">Create</span>
<span class="t" style="left:736.50px;top:16.00px;font-size:10.4px;color:#6B778C;font-weight:400;letter-spacing:-0.287px;-webkit-text-stroke:0.18px #6B778C;">Search</span>
<span class="t" style="left:866.30px;top:16.00px;font-size:9.5px;color:#6B778C;font-weight:400;letter-spacing:0.000px;-webkit-text-stroke:0.18px #6B778C;">/</span>
<span class="t" style="left:50.20px;top:61.00px;font-size:10.4px;color:#42526E;font-weight:700;letter-spacing:-0.397px;">Compass</span>
<span class="t" style="left:50.20px;top:73.00px;font-size:8.3px;color:#6B778C;font-weight:400;letter-spacing:0.430px;-webkit-text-stroke:0.18px #6B778C;">Software project</span>
<span class="t" style="left:47.60px;top:105.00px;font-size:10.4px;color:#42526E;font-weight:400;letter-spacing:-0.277px;-webkit-text-stroke:0.27px #42526E;">Roadmap</span>
<span class="t" style="left:47.60px;top:132.00px;font-size:10.4px;color:#42526E;font-weight:400;letter-spacing:-0.061px;-webkit-text-stroke:0.27px #42526E;">Backlog</span>
<span class="t" style="left:47.60px;top:160.00px;font-size:10.4px;color:#42526E;font-weight:400;letter-spacing:-0.234px;-webkit-text-stroke:0.27px #42526E;">Board</span>
<span class="t" style="left:47.60px;top:188.00px;font-size:10.4px;color:#42526E;font-weight:400;letter-spacing:-0.315px;-webkit-text-stroke:0.27px #42526E;">Code</span>
<span class="t" style="left:47.60px;top:216.00px;font-size:10.4px;color:#42526E;font-weight:400;letter-spacing:-0.004px;-webkit-text-stroke:0.27px #42526E;">Deployments</span>
<span class="t" style="left:47.60px;top:244.00px;font-size:10.4px;color:#0749D1;font-weight:400;letter-spacing:-0.304px;-webkit-text-stroke:0.27px #0749D1;">Releases</span>
<span class="t" style="left:47.60px;top:271.00px;font-size:10.4px;color:#42526E;font-weight:400;letter-spacing:-0.417px;-webkit-text-stroke:0.27px #42526E;">Pages</span>
<span class="t" style="left:47.60px;top:299.00px;font-size:10.4px;color:#42526E;font-weight:400;letter-spacing:0.026px;-webkit-text-stroke:0.27px #42526E;">Add item</span>
<span class="t" style="left:47.60px;top:327.00px;font-size:10.4px;color:#42526E;font-weight:400;letter-spacing:0.150px;-webkit-text-stroke:0.27px #42526E;">Project settings</span>
<span class="t" style="left:46.50px;top:872.00px;font-size:7.7px;color:#505F79;font-weight:400;letter-spacing:0.225px;-webkit-text-stroke:0.18px #505F79;">You’re in a next-gen project</span>
<span class="t" style="left:46.50px;top:888.00px;font-size:7.7px;color:#6B778C;font-weight:400;letter-spacing:0.162px;-webkit-text-stroke:0.18px #6B778C;">Give feedback</span>
<span class="t" style="left:105.60px;top:888.00px;font-size:7.7px;color:#6B778C;font-weight:400;letter-spacing:0.110px;-webkit-text-stroke:0.18px #6B778C;">Learn more</span>
<span class="t" style="left:183.20px;top:57.00px;font-size:8.7px;color:#6B778C;font-weight:400;letter-spacing:0.103px;-webkit-text-stroke:0.12px #6B778C;">Projects / Compass / Release / Version 1.1.0</span>
<span class="t" style="left:183.80px;top:82.00px;font-size:16.6px;color:#0B1628;font-weight:400;letter-spacing:-0.756px;-webkit-text-stroke:0.4px #0B1628;">Version 1.1.0</span>
<span class="t" style="left:279.60px;top:86.00px;font-size:7.7px;color:#0747A6;font-weight:700;letter-spacing:-0.263px;">UNRELEASED</span>
<span class="t" style="left:205.60px;top:116.00px;font-size:10.4px;color:#172B4D;font-weight:400;letter-spacing:-0.164px;-webkit-text-stroke:0.18px #172B4D;">Start: Mar 17, 2022</span>
<span class="t" style="left:298.40px;top:116.00px;font-size:10.4px;color:#172B4D;font-weight:400;letter-spacing:-0.236px;-webkit-text-stroke:0.18px #172B4D;">Release: May18, 2022</span>
<span class="t" style="left:183.20px;top:154.00px;font-size:10.4px;color:#172B4D;font-weight:400;letter-spacing:-0.005px;-webkit-text-stroke:0.18px #172B4D;">Version description</span>
<span class="t" style="left:715.10px;top:86.00px;font-size:10.4px;color:#42526E;font-weight:400;letter-spacing:-0.028px;-webkit-text-stroke:0.27px #42526E;">Give feedback</span>
<span class="t" style="left:832.30px;top:86.00px;font-size:10.4px;color:#42526E;font-weight:400;letter-spacing:-0.024px;-webkit-text-stroke:0.27px #42526E;">Manage warnings</span>
<span class="t" style="left:937.00px;top:86.00px;font-size:10.4px;color:#fff;font-weight:400;letter-spacing:-0.388px;-webkit-text-stroke:0.3px #fff;">Release</span>
<span class="t" style="left:183.20px;top:193.00px;font-size:11.2px;color:#0B1628;font-weight:700;letter-spacing:0.060px;">Related work</span>
<span class="t" style="left:188.80px;top:227.00px;font-size:9.4px;color:#0749D1;font-weight:400;letter-spacing:-0.161px;-webkit-text-stroke:0.25px #0749D1;">All</span>
<span class="t" style="left:204.00px;top:227.00px;font-size:9.4px;color:#0749D1;font-weight:700;letter-spacing:0.000px;">1</span>
<span class="t" style="left:225.50px;top:227.00px;font-size:9.4px;color:#42526E;font-weight:400;letter-spacing:0.046px;-webkit-text-stroke:0.25px #42526E;">Communicate</span>
<span class="t" style="left:288.60px;top:227.00px;font-size:9.4px;color:#42526E;font-weight:700;letter-spacing:0.000px;">1</span>
<span class="t" style="left:216.80px;top:267.00px;font-size:10.4px;color:#172B4D;font-weight:400;letter-spacing:-0.021px;-webkit-text-stroke:0.18px #172B4D;">Add blog post</span>
<span class="t" style="left:579.90px;top:267.00px;font-size:10.4px;color:#42526E;font-weight:400;letter-spacing:0.014px;-webkit-text-stroke:0.27px #42526E;">Create issue</span>
<span class="t" style="left:660.80px;top:267.00px;font-size:10.4px;color:#42526E;font-weight:400;letter-spacing:0.087px;-webkit-text-stroke:0.27px #42526E;">Link issue</span>
<span class="t" style="left:441.60px;top:409.00px;font-size:10.4px;color:#42526E;font-weight:400;letter-spacing:-0.179px;-webkit-text-stroke:0.27px #42526E;">Assignee</span>
<span class="t" style="left:875.50px;top:409.00px;font-size:10.4px;color:#42526E;font-weight:400;letter-spacing:0.015px;-webkit-text-stroke:0.27px #42526E;">Sort: Deployment</span>
<span class="t" style="left:710.60px;top:451.00px;font-size:7.7px;color:#006644;font-weight:700;letter-spacing:-0.140px;">DONE</span>
<span class="t" style="left:440.30px;top:483.00px;font-size:10.4px;color:#172B4D;font-weight:400;letter-spacing:-0.065px;-webkit-text-stroke:0.18px #172B4D;">cations issue</span>
<span class="t" style="left:710.60px;top:484.00px;font-size:7.7px;color:#006644;font-weight:700;letter-spacing:-0.140px;">DONE</span>
<span class="t" style="left:216.60px;top:517.00px;font-size:10.4px;color:#6B778C;font-weight:400;letter-spacing:-0.133px;-webkit-text-stroke:0.18px #6B778C;">COM-25</span>
<span class="t" style="left:261.60px;top:517.00px;font-size:10.4px;color:#172B4D;font-weight:400;letter-spacing:-0.068px;-webkit-text-stroke:0.18px #172B4D;">Microsite - Overview Page Graphics</span>
<span class="t" style="left:680.40px;top:517.00px;font-size:7.7px;color:#0747A6;font-weight:700;letter-spacing:-0.141px;">IN PROGRESS</span>
<span class="t" style="left:216.60px;top:550.00px;font-size:10.4px;color:#6B778C;font-weight:400;letter-spacing:-0.021px;-webkit-text-stroke:0.18px #6B778C;">COM-6</span>
<span class="t" style="left:256.10px;top:550.00px;font-size:10.4px;color:#172B4D;font-weight:400;letter-spacing:-0.048px;-webkit-text-stroke:0.18px #172B4D;">Homepage footer uses an inline style - should use a class</span>
<span class="t" style="left:680.40px;top:550.00px;font-size:7.7px;color:#0747A6;font-weight:700;letter-spacing:-0.141px;">IN PROGRESS</span>
<span class="t" style="left:216.60px;top:583.00px;font-size:10.4px;color:#6B778C;font-weight:400;letter-spacing:-0.433px;-webkit-text-stroke:0.18px #6B778C;">COM-17</span>
<span class="t" style="left:260.30px;top:583.00px;font-size:10.4px;color:#172B4D;font-weight:400;letter-spacing:-0.103px;-webkit-text-stroke:0.18px #172B4D;">CSS updates for new guidelines</span>
<span class="t" style="left:710.60px;top:584.00px;font-size:7.7px;color:#006644;font-weight:700;letter-spacing:-0.140px;">DONE</span>
<span class="t" style="left:216.60px;top:617.00px;font-size:10.4px;color:#6B778C;font-weight:400;letter-spacing:-0.233px;-webkit-text-stroke:0.18px #6B778C;">COM-15</span>
<span class="t" style="left:260.30px;top:617.00px;font-size:10.4px;color:#172B4D;font-weight:400;letter-spacing:-0.111px;-webkit-text-stroke:0.18px #172B4D;">CLONE - T-Shirt</span>
<span class="t" style="left:710.60px;top:617.00px;font-size:7.7px;color:#006644;font-weight:700;letter-spacing:-0.140px;">DONE</span>
<span class="t" style="left:216.60px;top:650.00px;font-size:10.4px;color:#6B778C;font-weight:400;letter-spacing:-0.233px;-webkit-text-stroke:0.18px #6B778C;">COM-12</span>
<span class="t" style="left:260.30px;top:650.00px;font-size:10.4px;color:#172B4D;font-weight:400;letter-spacing:0.015px;-webkit-text-stroke:0.18px #172B4D;">When requesting user details the service should return prior trip info</span>
<span class="t" style="left:680.40px;top:650.00px;font-size:7.7px;color:#0747A6;font-weight:700;letter-spacing:-0.141px;">IN PROGRESS</span>
<span class="t" style="left:216.60px;top:683.00px;font-size:10.4px;color:#6B778C;font-weight:400;letter-spacing:-0.414px;-webkit-text-stroke:0.18px #6B778C;">COM-113</span>
<span class="t" style="left:265.50px;top:683.00px;font-size:10.4px;color:#172B4D;font-weight:400;letter-spacing:-0.101px;-webkit-text-stroke:0.18px #172B4D;">Engage Saturn's Rings Resort as a preferred provider</span>
<span class="t" style="left:680.40px;top:684.00px;font-size:7.7px;color:#0747A6;font-weight:700;letter-spacing:-0.141px;">IN PROGRESS</span>
<span class="t" style="left:216.60px;top:717.00px;font-size:10.4px;color:#6B778C;font-weight:400;letter-spacing:-0.053px;-webkit-text-stroke:0.18px #6B778C;">COM-35</span>
<span class="t" style="left:262.20px;top:717.00px;font-size:10.4px;color:#172B4D;font-weight:400;letter-spacing:-0.049px;-webkit-text-stroke:0.18px #172B4D;">Establish basic app dev framework</span>
<span class="t" style="left:708.40px;top:717.00px;font-size:7.7px;color:#42526E;font-weight:700;letter-spacing:-0.055px;">TO DO</span>
<span class="t" style="left:216.60px;top:750.00px;font-size:10.4px;color:#6B778C;font-weight:400;letter-spacing:-0.088px;-webkit-text-stroke:0.18px #6B778C;">CS-20</span>
<span class="t" style="left:252.30px;top:750.00px;font-size:10.4px;color:#172B4D;font-weight:400;letter-spacing:-0.085px;-webkit-text-stroke:0.18px #172B4D;">After 100,000 requests the SeeSpaceEZ server dies</span>
<span class="t" style="left:708.40px;top:750.00px;font-size:7.7px;color:#42526E;font-weight:700;letter-spacing:-0.055px;">TO DO</span>
<span class="t" style="left:216.60px;top:783.00px;font-size:10.4px;color:#6B778C;font-weight:400;letter-spacing:-0.211px;-webkit-text-stroke:0.18px #6B778C;">MAC-9</span>
<span class="t" style="left:255.20px;top:783.00px;font-size:10.4px;color:#172B4D;font-weight:400;letter-spacing:-0.048px;-webkit-text-stroke:0.18px #172B4D;">Afterburner revision VI design</span>
<span class="t" style="left:708.40px;top:784.00px;font-size:7.7px;color:#42526E;font-weight:700;letter-spacing:-0.055px;">TO DO</span>
<span class="t" style="left:216.60px;top:817.00px;font-size:10.4px;color:#6B778C;font-weight:400;letter-spacing:-0.458px;-webkit-text-stroke:0.18px #6B778C;">BG-18</span>
<span class="t" style="left:251.40px;top:817.00px;font-size:10.4px;color:#172B4D;font-weight:400;letter-spacing:-0.072px;-webkit-text-stroke:0.18px #172B4D;">New API Access Points (mobile optimized)</span>
<span class="t" style="left:708.40px;top:817.00px;font-size:7.7px;color:#42526E;font-weight:700;letter-spacing:-0.055px;">TO DO</span>
<span class="t" style="left:216.60px;top:850.00px;font-size:10.4px;color:#6B778C;font-weight:400;letter-spacing:-0.482px;-webkit-text-stroke:0.18px #6B778C;">BG-101</span>
<span class="t" style="left:256.60px;top:850.00px;font-size:10.4px;color:#172B4D;font-weight:400;letter-spacing:-0.122px;-webkit-text-stroke:0.18px #172B4D;">Team Travel Mobile Apps</span>
<span class="t" style="left:708.40px;top:850.00px;font-size:7.7px;color:#42526E;font-weight:700;letter-spacing:-0.055px;">TO DO</span>
<span class="t" style="left:216.60px;top:883.00px;font-size:10.4px;color:#6B778C;font-weight:400;letter-spacing:0.017px;-webkit-text-stroke:0.18px #6B778C;">BG-45</span>
<span class="t" style="left:252.80px;top:883.00px;font-size:10.4px;color:#172B4D;font-weight:400;letter-spacing:-0.071px;-webkit-text-stroke:0.18px #172B4D;">As a user I can share my upcoming trip on facebook</span>
<span class="t" style="left:708.40px;top:884.00px;font-size:7.7px;color:#42526E;font-weight:700;letter-spacing:-0.055px;">TO DO</span>
<span class="t" style="left:817.30px;top:450.00px;font-size:10.4px;color:#172B4D;font-weight:400;letter-spacing:0.024px;-webkit-text-stroke:0.18px #172B4D;">Production</span>
<span class="t" style="left:817.30px;top:483.00px;font-size:10.4px;color:#172B4D;font-weight:400;letter-spacing:0.024px;-webkit-text-stroke:0.18px #172B4D;">Production</span>
<span class="t" style="left:817.30px;top:517.00px;font-size:10.4px;color:#172B4D;font-weight:400;letter-spacing:-0.108px;-webkit-text-stroke:0.18px #172B4D;">Staging</span>
<span class="t" style="left:817.30px;top:550.00px;font-size:10.4px;color:#172B4D;font-weight:400;letter-spacing:-0.108px;-webkit-text-stroke:0.18px #172B4D;">Staging</span>
<span class="t" style="left:817.30px;top:583.00px;font-size:10.4px;color:#172B4D;font-weight:400;letter-spacing:-0.149px;-webkit-text-stroke:0.18px #172B4D;">WEB-920...</span>
<span class="t" style="left:903.50px;top:450.00px;font-size:10.4px;color:#172B4D;font-weight:400;letter-spacing:-0.498px;-webkit-text-stroke:0.18px #172B4D;">50%</span>
<span class="t" style="left:903.50px;top:483.00px;font-size:10.4px;color:#172B4D;font-weight:400;letter-spacing:-0.593px;-webkit-text-stroke:0.18px #172B4D;">100%</span>
<span class="t" style="left:903.50px;top:517.00px;font-size:10.4px;color:#172B4D;font-weight:400;letter-spacing:-0.448px;-webkit-text-stroke:0.18px #172B4D;">20%</span>
<div class="a" style="left:183px;top:298.800px;width:259.800px;height:203.400px;background:#fff;border-radius:2.500px;box-shadow:0 0 0 0.700px rgba(9,30,66,0.10),0 1.600px 2.400px -0.300px rgba(9,30,66,0.16);"></div>
<svg style="left:0;top:0;" width="999" height="911" viewBox="0 0 999 911"><rect x="200.600" y="325" width="224.700" height="25.800" rx="2.200" fill="#FAFBFC" stroke="#DFE1E6" stroke-width="1.400"/><rect x="200.600" y="377.800" width="224.700" height="25.800" rx="2.200" fill="#FAFBFC" stroke="#DFE1E6" stroke-width="1.400"/><rect x="199.900" y="429.900" width="226.100" height="26.800" rx="2.200" fill="#F4F5F7"/><path d="M409.65 442.60L411.80 444.80L413.95 442.60" fill="none" stroke="#172B4D" stroke-width="1.4" stroke-linecap="round" stroke-linejoin="round"/><rect x="199.900" y="468.500" width="54.600" height="22.100" rx="2.200" fill="#0749D1"/></svg>
<span class="t" style="left:200.00px;top:312.00px;font-size:8.8px;color:#6B778C;font-weight:700;letter-spacing:-0.498px;">Link</span>
<span class="t" style="left:200.00px;top:364.00px;font-size:8.8px;color:#6B778C;font-weight:700;letter-spacing:-0.141px;">Description</span>
<span class="t" style="left:200.00px;top:417.00px;font-size:8.8px;color:#6B778C;font-weight:700;letter-spacing:-0.149px;">Category</span>
<span class="t" style="left:205.70px;top:335.00px;font-size:10.4px;color:#7A869A;font-weight:400;letter-spacing:-0.495px;-webkit-text-stroke:0.18px #7A869A;">Add URL</span>
<span class="t" style="left:205.70px;top:387.00px;font-size:10.4px;color:#7A869A;font-weight:400;letter-spacing:-0.040px;-webkit-text-stroke:0.18px #7A869A;">e.g. Analytics dashboard</span>
<span class="t" style="left:205.70px;top:440.00px;font-size:10.4px;color:#172B4D;font-weight:400;letter-spacing:-0.171px;-webkit-text-stroke:0.18px #172B4D;">Communicate</span>
<span class="t" style="left:208.60px;top:476.00px;font-size:10.4px;color:#fff;font-weight:400;letter-spacing:0.062px;-webkit-text-stroke:0.3px #fff;">Add link</span>
<svg style="left:0;top:0;" width="999" height="911" viewBox="0 0 999 911"><path d="M999 908.200V911H996.200Z" fill="#9A9A9A"/></svg>
</div>
</body></html>
